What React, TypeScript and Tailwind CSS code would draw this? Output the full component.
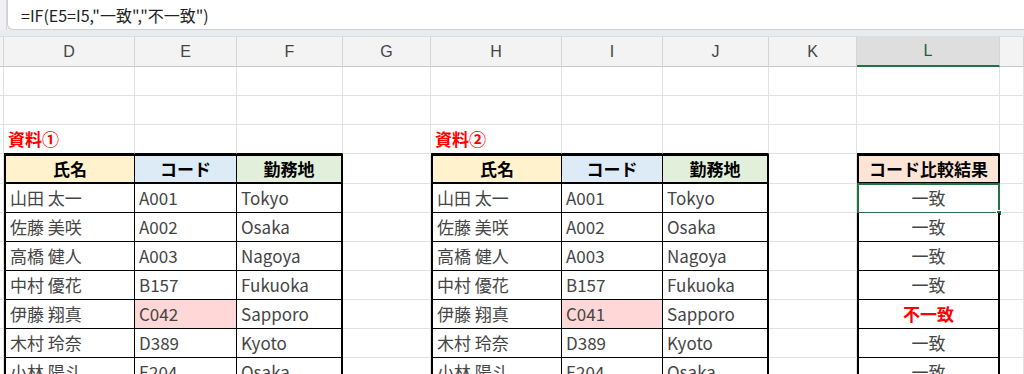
import React from "react";

// column widths of the visible sheet area (row-header sliver, D..L, M)
const cols = [
  { key: "A", w: "w-[4px]" },
  { key: "D", w: "w-[131px]" },
  { key: "E", w: "w-[102px]" },
  { key: "F", w: "w-[106px]" },
  { key: "G", w: "w-[88px]" },
  { key: "H", w: "w-[131px]" },
  { key: "I", w: "w-[101px]" },
  { key: "J", w: "w-[106px]" },
  { key: "K", w: "w-[88px]" },
  { key: "L", w: "w-[143px]" },
  { key: "M", w: "w-[24px]" },
];

type Row = { name: string; code: string; place: string; result: string; diff?: boolean };

const left: Row[] = [
  { name: "山田 太一", code: "A001", place: "Tokyo", result: "一致" },
  { name: "佐藤 美咲", code: "A002", place: "Osaka", result: "一致" },
  { name: "高橋 健人", code: "A003", place: "Nagoya", result: "一致" },
  { name: "中村 優花", code: "B157", place: "Fukuoka", result: "一致" },
  { name: "伊藤 翔真", code: "C042", place: "Sapporo", result: "不一致", diff: true },
  { name: "木村 玲奈", code: "D389", place: "Kyoto", result: "一致" },
  { name: "小林 陽斗", code: "E204", place: "Osaka", result: "一致" },
];

const right: Row[] = left.map((r) => (r.diff ? { ...r, code: "C041" } : r));

const grid = "border-r border-b border-[#e1e1e1]";

function Blank({ w, extra = "" }: { w: string; extra?: string }) {
  return <div className={`${w} shrink-0 h-full ${grid} ${extra}`} />;
}

function EmptyRow({ h = "h-[29px]" }: { h?: string }) {
  return (
    <div className={`flex ${h}`}>
      {cols.map((c) => (
        <Blank key={c.key} w={c.w} />
      ))}
    </div>
  );
}

function Data({
  w,
  children,
  first = false,
  last = false,
  center = false,
  bg = "bg-white",
}: {
  w: string;
  children?: React.ReactNode;
  first?: boolean;
  last?: boolean;
  center?: boolean;
  bg?: string;
}) {
  return (
    <div
      className={`${w} shrink-0 h-full flex items-center border-b border-b-black ${
        first ? "border-l-2 border-l-black" : ""
      } ${last ? "border-r-2 border-r-black" : "border-r border-r-black"} ${
        center ? "justify-center" : "pl-[4px]"
      } ${bg} text-[17px] text-[#454545] whitespace-nowrap overflow-hidden`}
    >
      {children}
    </div>
  );
}

function Head({
  w,
  children,
  bg,
  first = false,
  last = false,
}: {
  w: string;
  children: React.ReactNode;
  bg: string;
  first?: boolean;
  last?: boolean;
}) {
  return (
    <div
      className={`${w} shrink-0 h-full flex items-center justify-center border-t-2 border-t-black border-b-2 border-b-black ${
        first ? "border-l-2 border-l-black" : ""
      } ${last ? "border-r-2 border-r-black" : "border-r border-r-black"} ${bg} text-[17px] font-bold text-black whitespace-nowrap`}
    >
      {children}
    </div>
  );
}

export default function App() {
  return (
    <div
      className="w-[1024px] h-[374px] overflow-hidden bg-white"
      style={{ fontFamily: '"Noto Sans CJK JP", "Noto Sans", sans-serif' }}
    >
      {/* formula bar */}
      <div className="flex h-[30px] bg-[#eef0f3]">
        <div className="w-[7px] shrink-0 border-r border-[#d6d6d6]" />
        <div className="flex-1 flex items-center bg-white border-b border-l border-[#cfcfcf] rounded-bl-[6px] pl-[13px] text-[16px] text-[#222]">
          =IF(E5=I5,"一致","不一致")
        </div>
      </div>
      <div className="h-[7px] bg-[#e9ecef] border-b border-[#dedede]" />

      {/* column letters */}
      <div className="flex h-[30px] bg-[#f3f3f3]">
        {cols.map((c) => (
          <div
            key={c.key}
            className={`${c.w} shrink-0 h-full flex items-center justify-center text-[16px] ${
              c.key === "L"
                ? "bg-[#dedede] text-[#1e5e3a] border-b-2 border-b-[#217346]"
                : "text-[#444] border-b border-b-[#c8c8c8]"
            } border-r border-r-[#d4d4d4]`}
            style={{ fontFamily: '"Liberation Sans", "Noto Sans", sans-serif' }}
          >
            {c.key === "A" || c.key === "M" ? "" : c.key}
          </div>
        ))}
      </div>

      <EmptyRow />
      <EmptyRow />

      {/* table titles */}
      <div className="flex h-[29px]">
        <Blank w={cols[0].w} />
        <div className={`${cols[1].w} shrink-0 h-full ${grid} border-b-black flex items-center pl-[4px] text-[17px] font-bold text-[#ff0000] whitespace-nowrap`}>
          資料①
        </div>
        <Blank w={cols[2].w} extra="border-b-black" />
        <Blank w={cols[3].w} extra="border-b-black" />
        <Blank w={cols[4].w} />
        <div className={`${cols[5].w} shrink-0 h-full ${grid} border-b-black flex items-center pl-[4px] text-[17px] font-bold text-[#ff0000] whitespace-nowrap`}>
          資料②
        </div>
        <Blank w={cols[6].w} extra="border-b-black" />
        <Blank w={cols[7].w} extra="border-b-black" />
        <Blank w={cols[8].w} />
        <Blank w={cols[9].w} extra="border-b-black" />
        <Blank w={cols[10].w} />
      </div>

      {/* header row */}
      <div className="flex h-[30px]">
        <Blank w={cols[0].w} />
        <Head w="w-[131px]" bg="bg-[#fff2cc]" first>氏名</Head>
        <Head w="w-[102px]" bg="bg-[#ddebf7]">コード</Head>
        <Head w="w-[106px]" bg="bg-[#e2efda]" last>勤務地</Head>
        <Blank w={cols[4].w} />
        <Head w="w-[131px]" bg="bg-[#fff2cc]" first>氏名</Head>
        <Head w="w-[101px]" bg="bg-[#ddebf7]">コード</Head>
        <Head w="w-[106px]" bg="bg-[#e2efda]" last>勤務地</Head>
        <Blank w={cols[8].w} />
        <Head w="w-[143px]" bg="bg-[#fce4d6]" first last>コード比較結果</Head>
        <Blank w={cols[10].w} />
      </div>

      {/* data rows */}
      {left.map((r, i) => {
        const rr = right[i];
        return (
          <div key={i} className="flex h-[29px]">
            <Blank w={cols[0].w} />
            <Data w="w-[131px]" first>{r.name}</Data>
            <Data w="w-[102px]" bg={r.diff ? "bg-[#ffd7d7]" : "bg-white"}>{r.code}</Data>
            <Data w="w-[106px]" last>{r.place}</Data>
            <Blank w={cols[4].w} />
            <Data w="w-[131px]" first>{rr.name}</Data>
            <Data w="w-[101px]" bg={rr.diff ? "bg-[#ffd7d7]" : "bg-white"}>{rr.code}</Data>
            <Data w="w-[106px]" last>{rr.place}</Data>
            <Blank w={cols[8].w} />
            <div className="relative w-[143px] shrink-0 h-full">
              <Data w="w-[143px]" first last center>
                {r.diff ? (
                  <span className="font-bold text-[#ff0000]">{r.result}</span>
                ) : (
                  r.result
                )}
              </Data>
              {i === 0 && (
                <div className="absolute left-0 top-[-1px] right-0 bottom-[-1px] border-2 border-[#217346]">
                  <div className="absolute right-[-4px] bottom-[-4px] w-[6px] h-[6px] bg-[#217346] border border-white" />
                </div>
              )}
            </div>
            <Blank w={cols[10].w} />
          </div>
        );
      })}
    </div>
  );
}
